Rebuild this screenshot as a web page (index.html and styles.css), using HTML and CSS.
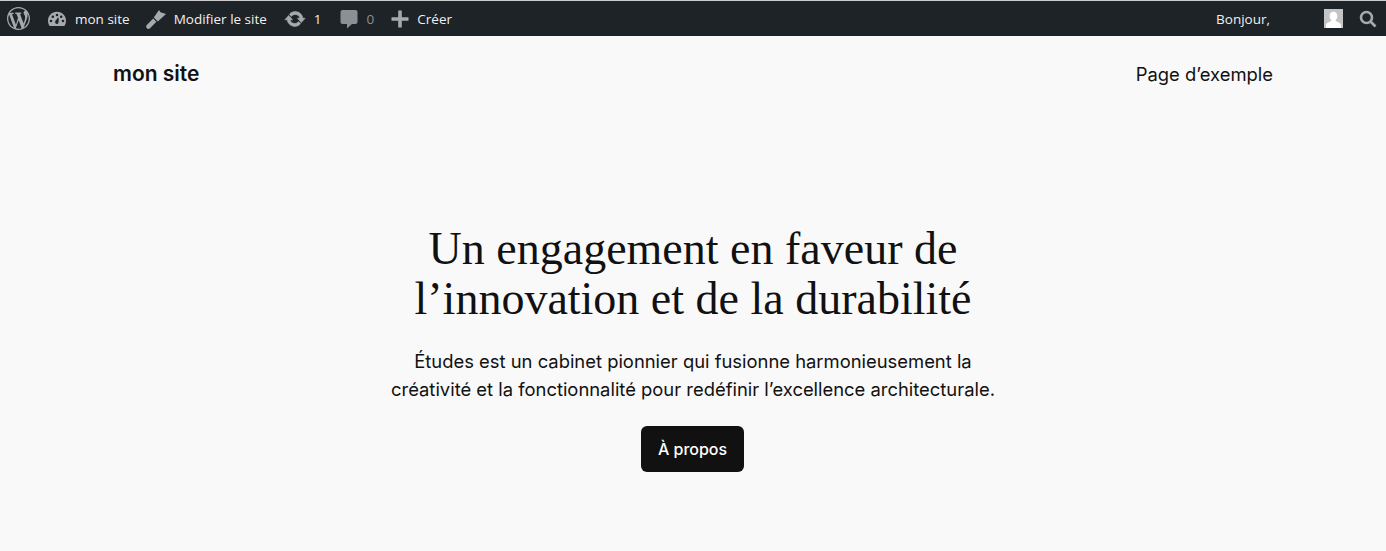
FILE: index.html
```html
<!DOCTYPE html>
<html lang="fr">
<head>
    <title>mon site</title>
    <link rel="stylesheet" href="styles.css">
</head>
<body>
    <div class="adminbar">
        <div class="bar-group">
            <a class="bar-item wp-item" aria-label="WordPress">
                <svg class="wp-logo" viewBox="0 0 20 20"><path d="M20 10c0-5.51-4.49-10-10-10C4.480 0 0 4.490 0 10c0 5.520 4.480 10 10 10 5.510 0 10-4.480 10-10zM7.780 15.370L4.370 6.220c.55-.02 1.170-.08 1.170-.08.500-.060.440-1.130-.060-1.110 0 0-1.450.110-2.370.110-.180 0-.370 0-.580-.010C4.120 2.690 6.910 1.100 10 1.100c2.300 0 4.390.870 5.970 2.300-.66-.110-1.600.380-1.600 1.540 0 .720.440 1.320.880 2.040.350.610.550 1.360.550 2.460 0 1.490-1.400 5-1.400 5l-3.030-8.370c.540-.020.820-.170.820-.170.500-.050.440-1.250-.060-1.220 0 0-1.440.120-2.380.120-.870 0-2.330-.120-2.330-.120-.500-.030-.560 1.200-.060 1.220l.920.080 1.260 3.410zM17.410 10c.240-.640.740-1.870.430-4.250.700 1.290 1.050 2.710 1.050 4.250 0 3.290-1.730 6.240-4.400 7.780.970-2.590 1.940-5.200 2.920-7.780zM6.100 18.090C3.120 16.650 1.110 13.530 1.110 10c0-1.300.230-2.480.720-3.580C3.250 10.320 4.670 14.210 6.100 18.090zm4.030-6.630l2.580 6.980c-.850.290-1.740.450-2.710.450-.820 0-1.600-.120-2.370-.330zm2.580 6.980"/></svg>
            </a>
            <a class="bar-item site-item">
                <svg class="bar-icon" viewBox="0 0 20 20"><path d="M10 2.800C4.800 2.800 1 7 1 11.900c0 1.700.4 3.100 1.100 4.300.4.600.9.900 1.500.9h12.800c.6 0 1.100-.3 1.500-.9.700-1.200 1.100-2.600 1.100-4.300 0-4.900-3.800-9.100-9-9.100zM4 13.300a1.300 1.300 0 1 1 0-2.600 1.300 1.300 0 0 1 0 2.600zm1.800-4.300a1.300 1.300 0 1 1 0-2.600 1.300 1.300 0 0 1 0 2.600zm4.200-1.700a1.300 1.300 0 1 1 0-2.600 1.300 1.300 0 0 1 0 2.600zm1.300 6.900a1.800 1.800 0 0 1-3.200-1.400c.2-.6 2.800-4.400 3.300-4.200.5.200.4 4.900-.1 5.600zm2.900-5.200a1.300 1.300 0 1 1 0-2.600 1.300 1.300 0 0 1 0 2.600zm1.800 4.300a1.300 1.300 0 1 1 0-2.600 1.300 1.300 0 0 1 0 2.600z"/></svg>
                <span>mon site</span>
            </a>
            <a class="bar-item">
                <svg class="bar-icon" viewBox="0 0 20 20"><path d="M.800 16l6.400-6.400 3.200 3.200-6.400 6.400c-.900.900-2.300.900-3.200 0s-.900-2.300 0-3.200zM7.800 8.400L13 1l1.500 2.200L20 5l-8.200 7.400z"/></svg>
                <span>Modifier le site</span>
            </a>
            <a class="bar-item">
                <svg class="bar-icon sync-icon" viewBox="0 0 20 20"><path d="M10.200 3.280c3.530 0 6.430 2.610 6.920 6h2.080l-3.500 4-3.500-4h2.320c-.450-1.970-2.210-3.440-4.320-3.440-1.450 0-2.730.710-3.540 1.780L4.950 5.660C6.230 4.200 8.110 3.280 10.200 3.280zm-.400 13.440c-3.520 0-6.430-2.610-6.920-6H.800l3.500-4c1.170 1.330 2.330 2.670 3.500 4H5.480c.450 1.970 2.210 3.440 4.320 3.440 1.450 0 2.730-.710 3.540-1.780l1.710 1.950c-1.280 1.460-3.150 2.390-5.250 2.390z"/></svg>
                <span>1</span>
            </a>
            <a class="bar-item muted">
                <svg class="bar-icon" viewBox="0 0 20 20"><path d="M3.500 1h13c1.100 0 2 .900 2 2v10c0 1.100-.900 2-2 2H13l-5 4.500V15H3.500c-1.100 0-2-.900-2-2V3c0-1.100.900-2 2-2z"/></svg>
                <span>0</span>
            </a>
            <a class="bar-item">
                <svg class="plus-icon" viewBox="1 1 18 18"><path d="M18.500 8.200v3.600h-6.700v6.700H8.200v-6.700H1.500V8.200h6.700V1.500h3.600v6.700z"/></svg>
                <span>Créer</span>
            </a>
        </div>
        <div class="bar-group">
            <a class="bar-item greeting">Bonjour,</a>
            <svg class="avatar" viewBox="0 0 18 18"><rect width="18" height="18" fill="#c4c4c4"/><path fill="#fff" d="M9 2.500c2.300 0 3.700 1.900 3.700 4.200 0 1.700-.800 3.200-1.900 4 .300.700 1 1 2.200 1.500 1.700.700 3 1.400 3 2.800V18H2v-3c0-1.400 1.300-2.100 3-2.800 1.200-.500 1.900-.800 2.200-1.500-1.100-.800-1.900-2.300-1.900-4C5.300 4.400 6.700 2.500 9 2.500z"/></svg>
            <svg class="search-icon" viewBox="0 0 20 20"><circle cx="8.500" cy="8.500" r="5.500"/><line x1="12.500" y1="12.500" x2="17.500" y2="17.500"/></svg>
        </div>
    </div>

    <header class="site-header">
        <a class="site-title">mon site</a>
        <a class="site-nav">Page d’exemple</a>
    </header>

    <main class="hero">
        <h1>Un engagement en faveur de l’innovation et de la durabilité</h1>
        <p>Études est un cabinet pionnier qui fusionne harmonieusement la créativité et la fonctionnalité pour redéfinir l’excellence architecturale.</p>
        <a class="hero-button">À propos</a>
    </main>
</body>
</html>
```

FILE: styles.css
```css
* {
    box-sizing: border-box;
}
html, body {
    margin: 0;
    height: 100%;
}
body {
    font-family: Inter, "Liberation Sans", sans-serif;
    background: #f9f9f9;
    color: #111111;
    overflow: hidden;
}
.adminbar {
    height: 36px;
    display: flex;
    justify-content: space-between;
    background: #1d2327;
    border-top: 1px solid #c9cbcc;
    color: #f0f0f1;
    font-family: "Open Sans", "Liberation Sans", sans-serif;
    font-size: 13.500px;
}
.bar-group {
    display: flex;
    align-items: center;
}
.bar-item {
    display: flex;
    align-items: center;
    gap: 8px;
    margin-right: 17px;
}
.wp-item {
    margin-left: 7px;
    margin-right: 17px;
}
.site-item {
    margin-right: 16px;
}
.wp-logo {
    width: 23px;
    height: 23px;
    fill: #a7aaad;
}
.bar-icon {
    width: 20px;
    height: 20px;
    fill: #a7aaad;
}
.sync-icon {
    width: 22px;
    height: 22px;
    stroke: #a7aaad;
    stroke-width: 0.600;
}
.plus-icon {
    width: 18px;
    height: 18px;
    fill: #a7aaad;
}
.muted {
    color: #8c8f94;
}
.muted .bar-icon {
    fill: #8c8f94;
}
.greeting {
    margin-right: 54px;
}
.avatar {
    width: 19px;
    height: 19px;
    margin-right: 15px;
}
.search-icon {
    width: 20px;
    height: 20px;
    fill: none;
    stroke: #a7aaad;
    stroke-width: 2.600;
    margin-right: 8px;
}
.site-header {
    display: flex;
    justify-content: space-between;
    align-items: center;
    padding: 0 113px;
    height: 75px;
}
.site-title {
    font-size: 21px;
    font-weight: 600;
}
.site-nav {
    font-size: 18.400px;
}
.hero {
    display: flex;
    flex-direction: column;
    align-items: center;
    padding-top: 113px;
    text-align: center;
}
h1 {
    margin: 0 0 23px;
    width: 620px;
    font-family: "Liberation Serif", serif;
    font-size: 46px;
    font-weight: 400;
    line-height: 50px;
}
p {
    margin: 0 0 22.600px;
    width: 620px;
    font-size: 18.400px;
    line-height: 28px;
}
.hero-button {
    padding: 12px 16.600px;
    margin-right: 1px;
    background: #111111;
    color: #ffffff;
    border-radius: 6px;
    font-size: 16px;
    font-weight: 500;
    line-height: 22px;
}
```
